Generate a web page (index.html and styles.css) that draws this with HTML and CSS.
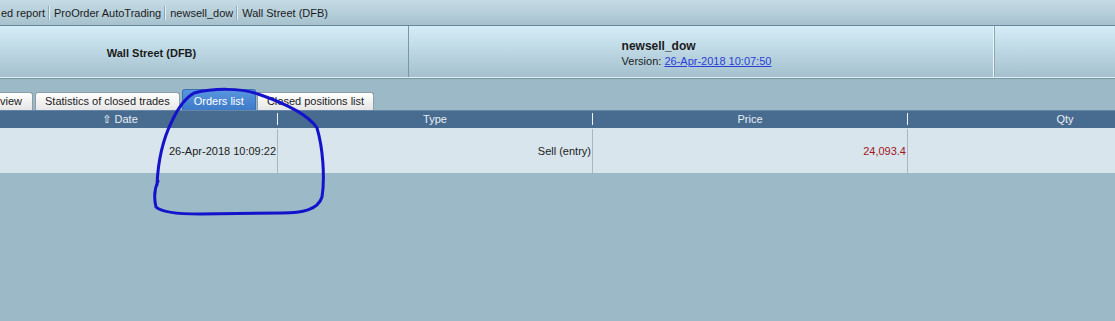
FILE: index.html
```html
<!DOCTYPE html>
<html>
<head>
  <title>Orders list</title>
  <link rel="stylesheet" href="styles.css">
</head>
<body>
  <div id="Crumbs">
    <span>ed report</span><i class="sep"></i>
    <span>ProOrder AutoTrading</span><i class="sep"></i>
    <span>newsell_dow</span><i class="sep"></i>
    <span>Wall Street (DFB)</span>
  </div>

  <div id="Summary">
    <div class="panel first"><b>Wall Street (DFB)</b></div>
    <div class="panel middle">
      <div class="info">
        <div class="name">newsell_dow</div>
        <div class="version">Version: <a href="#">26-Apr-2018 10:07:50</a></div>
      </div>
    </div>
    <div class="panel last"></div>
  </div>

  <div id="Tabs">
    <div class="tab firsttab">view</div>
    <div class="tab">Statistics of closed trades</div>
    <div class="tab current">Orders list</div>
    <div class="tab">Closed positions list</div>
  </div>

  <div id="Grid">
    <div class="head">
      <div class="hcell"><span class="arrow">&#8679;</span> Date</div>
      <div class="hcell">Type</div>
      <div class="hcell">Price</div>
      <div class="hcell">Qty</div>
    </div>
    <div class="row">
      <div class="cell">26-Apr-2018 10:09:22</div>
      <div class="cell">Sell (entry)</div>
      <div class="cell price">24,093.4</div>
      <div class="cell"></div>
    </div>
  </div>

  <svg class="ink" width="1115" height="321" viewBox="0 0 1115 321">
    <path d="M157,185 C158,160 164,137 172,121 C178,108 185,98 194,93 C214,88 240,88 258,94 C284,103 308,114 317,128 C323,148 325,178 322,197 C318,210 302,213 282,213 L200,214 C176,214 161,212 156,207 C154,199 154,190 158,181"
          fill="none" stroke="#1512cc" stroke-width="3" stroke-linecap="round"/>
  </svg>
</body>
</html>
```

FILE: styles.css
```css
body {
    margin: 0;
    width: 1115px;
    height: 321px;
    overflow: hidden;
    position: relative;
    background: #9bb9c7;
    font-family: "Liberation Sans", Arial, sans-serif;
    font-size: 11px;
    color: #1b1b1b;
}

/* breadcrumb bar */
div#Crumbs {
    height: 25px;
    display: flex;
    align-items: center;
    padding-left: 1px;
    background: linear-gradient(#c6dce5, #a6c2ce);
    border-bottom: 1px solid #68879a;
    white-space: nowrap;
}
div#Crumbs .sep {
    width: 1px;
    height: 14px;
    margin: 0 4px 0 3px;
    background: #e4eef2;
    border-left: 1px solid #8fa9b5;
}

/* summary panels */
div#Summary {
    display: flex;
    height: 51px;
    margin-left: -105px;
    border-bottom: 1px solid #e2f0f5;
    box-shadow: 0 1px 0 #7893a1;
}
div#Summary .panel {
    background: linear-gradient(#d4edf8, #a5c1ce);
    display: flex;
    align-items: center;
    justify-content: center;
}
div#Summary .first {
    width: 513px;
    border-right: 1px solid #7b97a5;
}
div#Summary .first b {
    margin-top: 2px;
}
div#Summary .middle {
    width: 585px;
    border-right: 1px solid #8ea9b5;
    box-shadow: inset -1px 0 0 #eaf5f9;
}
div#Summary .last {
    flex: 1;
}
div#Summary .info {
    margin-left: -10px;
    margin-top: 3px;
}
div#Summary .name {
    font-weight: bold;
    font-size: 12px;
    margin-bottom: 2px;
}
div#Summary .version a {
    color: #2a3ed8;
}

/* tabs */
div#Tabs {
    height: 32px;
    display: flex;
    align-items: flex-end;
    gap: 2px;
}
div#Tabs .tab {
    height: 17px;
    line-height: 17px;
    padding: 0 9px;
    background: linear-gradient(#ffffff, #e6e6e6);
    border: 1px solid #8c9ea9;
    border-bottom: none;
    border-radius: 3px 3px 0 0;
    white-space: nowrap;
}
div#Tabs .firsttab {
    padding: 0 10px 0 0;
    border-left: none;
    border-radius: 0 3px 0 0;
}
div#Tabs .current {
    height: 20px;
    line-height: 22px;
    padding: 0 11px;
    margin-right: -1px;
    background: linear-gradient(#5896df, #3e7bc8);
    border-color: #3a6fb3;
    color: #ffffff;
}

/* grid */
div#Grid {
    margin-left: -37px;
}
div#Grid .head, div#Grid .row {
    display: grid;
    grid-template-columns: 315px 315px 315px 315px;
}
div#Grid .head {
    height: 18px;
    align-items: center;
    background: #486b90;
    box-shadow: inset 0 1px 0 #6687a8;
    color: #e9eff5;
}
div#Grid .hcell {
    height: 12px;
    line-height: 12px;
    text-align: center;
    border-right: 1px solid #eef3f7;
}
div#Grid .arrow {
    font-family: "DejaVu Sans", sans-serif;
    font-size: 11px;
    color: #ffffff;
}
div#Grid .row {
    height: 45px;
    background: #d9e5ec;
}
div#Grid .cell {
    display: flex;
    align-items: center;
    justify-content: flex-end;
    padding-right: 1px;
    border-right: 1px solid #a9b7c0;
    margin-top: 1px;
}
div#Grid .price {
    color: #a3141c;
}

/* pen annotation over the page */
svg.ink {
    position: absolute;
    left: 0;
    top: 0;
    pointer-events: none;
}
```
